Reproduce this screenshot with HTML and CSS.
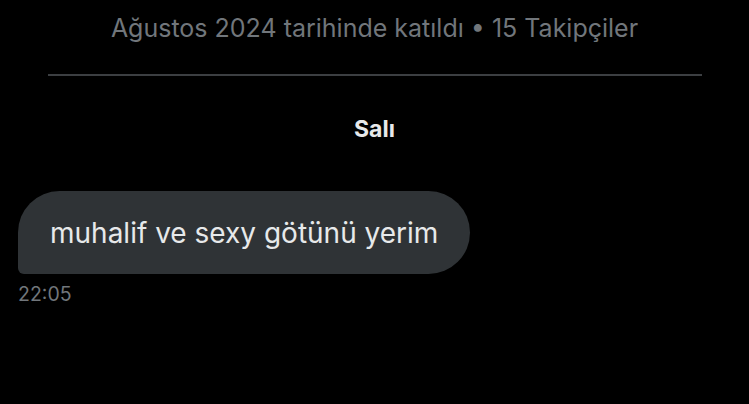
FILE: index.html
```html
<!DOCTYPE html>
<html lang="tr">
<head>
<meta charset="utf-8">
<link rel="stylesheet" href="styles.css">
</head>
<body>
<div class="page">
  <div class="joined">Ağustos 2024 tarihinde katıldı • 15 Takipçiler</div>
  <div class="divider"></div>
  <div class="day">Salı</div>
  <div class="msg">
    <div class="bubble">muhalif ve sexy götünü yerim</div>
    <div class="time">22:05</div>
  </div>
</div>
</body>
</html>
```
FILE: styles.css
```css
html, body {
  margin: 0;
  padding: 0;
  background: #000;
  width: 749px;
  height: 404px;
  overflow: hidden;
}
.page {
  font-family: Inter, "Noto Sans", sans-serif;
  display: flex;
  flex-direction: column;
}
.joined {
  color: #71767b;
  font-size: 25px;
  text-align: center;
  margin-top: 13px;
  line-height: 30px;
}
.divider {
  height: 2px;
  background: #3c3f42;
  margin: 31px 47px 0 48px;
}
.day {
  color: #e7e9ea;
  font-weight: 700;
  font-size: 23px;
  text-align: center;
  margin-top: 40px;
  line-height: 26px;
}
.msg {
  margin-top: 49px;
  padding-left: 18px;
  display: flex;
  flex-direction: column;
  align-items: flex-start;
}
.bubble {
  background: #2f3336;
  color: #e7e9ea;
  font-size: 28px;
  line-height: 34px;
  padding: 25px 32px 24px 32px;
  border-radius: 42px 42px 42px 6px;
}
.time {
  color: #71767b;
  font-size: 19.5px;
  margin-top: 9px;
  line-height: 22px;
}
```
